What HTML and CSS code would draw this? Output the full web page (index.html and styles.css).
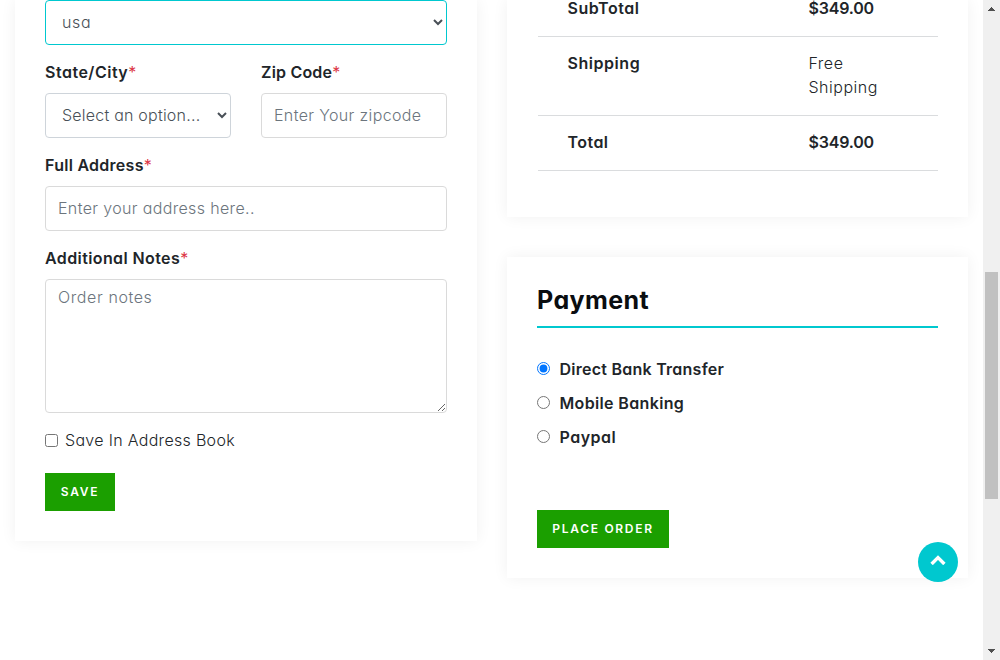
FILE: index.html
```html
<!DOCTYPE html>
<html lang="en">
<head>
<meta charset="utf-8">
<title>Checkout</title>
<link rel="stylesheet" href="styles.css">
</head>
<body>
<div class="viewport">
  <main class="checkout">
    <form class="card billing">
      <select class="control active" aria-label="Country"><option>usa</option></select>
      <div class="pair">
        <div class="field">
          <label class="label"><span class="t-state">State/City</span><i>*</i></label>
          <select class="control t-option"><option>Select an option...</option></select>
        </div>
        <div class="field">
          <label class="label"><span class="t-zip">Zip Code</span><i>*</i></label>
          <input class="control light" type="text" placeholder="Enter Your zipcode">
        </div>
      </div>
      <div class="field">
        <label class="label"><span class="t-full">Full Address</span><i>*</i></label>
        <input class="control light" type="text" placeholder="Enter your address here..">
      </div>
      <div class="field">
        <label class="label"><span class="t-notes">Additional Notes</span><i>*</i></label>
        <textarea class="control light notes" placeholder="Order notes"></textarea>
      </div>
      <label class="remember"><input type="checkbox"><span class="t-save">Save In Address Book</span></label>
      <button class="btn save" type="button">SAVE</button>
    </form>
    <div class="side">
      <section class="card summary">
        <div class="row"><span class="name">SubTotal</span><span class="strong">$349.00</span></div>
        <div class="row"><span class="name">Shipping</span><span class="value">Free<br>Shipping</span></div>
        <div class="row"><span class="name t-total">Total</span><span class="strong">$349.00</span></div>
      </section>
      <section class="card payment">
        <h2 class="title">Payment</h2>
        <div class="methods">
          <label class="method"><input type="radio" name="pay" checked><span class="t-bank">Direct Bank Transfer</span></label>
          <label class="method"><input type="radio" name="pay"><span class="t-mobile">Mobile Banking</span></label>
          <label class="method"><input type="radio" name="pay"><span class="t-paypal">Paypal</span></label>
        </div>
        <button class="btn place" type="button">PLACE ORDER</button>
      </section>
    </div>
  </main>
  <div class="scrollbar">
    <svg width="17" height="17" viewBox="0 0 17 17" shape-rendering="crispEdges"><path d="M8 7h1v1h1v1h1v1h1v1H5v-1h1V9h1V8h1z" fill="#505050"/></svg>
    <div class="track"><div class="thumb"></div></div>
    <svg width="17" height="17" viewBox="0 0 17 17" shape-rendering="crispEdges"><path d="M5 6h7v1h-1v1h-1v1H9v1H8V9H7V8H6V7H5z" fill="#505050"/></svg>
  </div>
  <a class="to-top" href="#" aria-label="Back to top">
    <svg width="16" height="10" viewBox="0 0 16 10"><path d="M1.6 9L8 2.6 14.4 9" fill="none" stroke="#fff" stroke-width="3.4"/></svg>
  </a>
</div>
</body>
</html>
```
FILE: styles.css
```css
* { box-sizing: border-box; }
body {
  margin: 0;
  background: #fff;
  color: #212529;
  font: 300 16px/24px Inter, "Liberation Sans", sans-serif;
  font-feature-settings: "cv11";
  overflow: hidden;
}
.viewport { position: relative; display: flex; height: 660px; overflow: hidden; }
.checkout { flex: 1; display: grid; grid-template-columns: 462px 461px; gap: 30px; padding-left: 15px; align-items: start; }
.card { background: #fff; box-shadow: 0 0 15px rgba(0, 0, 0, .06); padding: 0 30px 30px; }
.billing { display: flex; flex-direction: column; align-items: stretch; gap: 16px; }
.pair { display: grid; grid-template-columns: 1fr 1fr; gap: 30px; }
.field { display: flex; flex-direction: column; gap: 8px; }
.label { height: 24px; line-height: 22px; font-weight: 600; color: #212529; white-space: nowrap; }
.label i { font-style: normal; font-weight: 400; color: #dc3545; }
.control {
  display: block;
  width: 100%;
  height: 45px;
  margin: 0;
  padding: 5px 12px 7px;
  border: 1px solid #ced4da;
  border-radius: 4px;
  background: #fff;
  color: #495057;
  font: inherit;
  font-feature-settings: inherit;
  letter-spacing: .35px;
  outline: 0;
}
.control.light { border-color: #dadada; }
.control.active { border-color: #00c8cf; letter-spacing: .6px; }
.control.t-option { letter-spacing: .22px; }
.control::placeholder { color: #6c757d; opacity: 1; }
.control.notes { height: 134px; resize: vertical; letter-spacing: .6px; }
.remember { display: flex; align-items: center; gap: 7px; height: 24px; margin-bottom: 4px; }
.remember input, .method input { width: 13px; height: 13px; margin: 0; }
.remember input { margin-top: -1px; }
.remember span { line-height: 22px; margin-top: -2px; }
.t-state { letter-spacing: .5px; }
.t-zip { letter-spacing: .2px; }
.t-full { letter-spacing: .27px; }
.t-notes { letter-spacing: .4px; }
.t-save { letter-spacing: .31px; }
.t-bank { letter-spacing: .25px; }
.t-mobile { letter-spacing: .35px; }
.t-paypal { letter-spacing: .5px; }
.btn {
  height: 38px;
  border: 0;
  padding: 0;
  background: #1b9f00;
  color: #fff;
  font: 600 12px/18px Inter, "Liberation Sans", sans-serif;
  letter-spacing: 1.7px;
  white-space: nowrap;
}
.save { width: 70px; }
.place { width: 132px; }
.side { display: flex; flex-direction: column; gap: 40px; }
.summary { height: 217px; }
.row { display: grid; grid-template-columns: 241px 1fr; padding: 14px 0 16px 29.5px; border-bottom: 1px solid #dadcde; margin-left: 1px; }
.row:first-child { margin-top: -18px; }
.name, .strong { font-weight: 600; }
.name { letter-spacing: .55px; }
.name.t-total { letter-spacing: .45px; }
.strong { letter-spacing: -.2px; }
.value { letter-spacing: .5px; }
.payment { height: 321px; padding-top: 30px; }
.title { margin: 0 0 25px; height: 41px; border-bottom: 2px solid #00c8cf; color: #0a0d10; font-size: 25px; line-height: 27px; font-weight: 700; letter-spacing: .4px; }
.methods { display: flex; flex-direction: column; gap: 10px; margin-bottom: 61px; padding-top: 4px; }
.method { display: flex; align-items: center; gap: 9.5px; height: 24px; font-weight: 600; }
.method input { margin-top: -1px; }
.scrollbar { width: 17px; display: flex; flex-direction: column; background: #f0f0f0; }
.scrollbar svg { display: block; }
.track { flex: 1; padding: 255px 2px 0; }
.thumb { height: 227px; background: #c1c1c1; }
.to-top { position: absolute; left: 918px; top: 542px; width: 40px; height: 40px; border-radius: 50%; background: #00c8cf; display: flex; justify-content: center; padding-top: 13px; }
```
